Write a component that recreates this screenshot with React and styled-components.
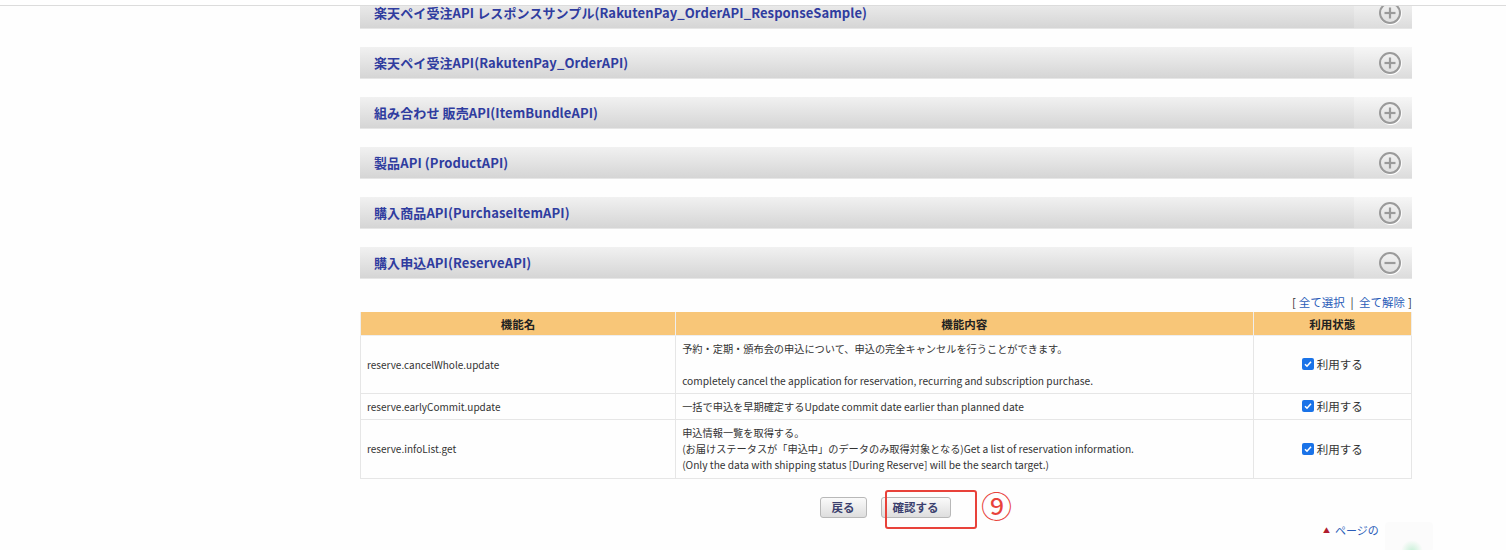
import React from "react";
import styled, { createGlobalStyle } from "styled-components";

const GlobalStyle = createGlobalStyle`
  html, body {
    margin: 0;
    padding: 0;
    background: #fff;
    font-family: "Noto Sans CJK JP", "Noto Sans", sans-serif;
    color: #333;
  }
`;

const Page = styled.div`
  width: 1506px;
  height: 550px;
  overflow: hidden;
  position: relative;
  background: #fefefe;
`;

const TopBar = styled.div`
  height: 5px;
  border-bottom: 1px solid #dcdcdc;
  background: #fff;
  position: relative;
  z-index: 2;
`;

const Content = styled.div`
  width: 1052px;
  margin: -9px 0 0 360px;
`;

const SectionHeader = styled.div`
  height: 32px;
  margin-bottom: 18px;
  display: flex;
  align-items: center;
  background: linear-gradient(#f1f1f1, #d5d5d5);
  border-bottom: 1px solid #e6e6e6;
  box-sizing: border-box;
`;

const SectionTitle = styled.div`
  flex: 1;
  padding-left: 14px;
  font-size: 13px;
  font-weight: 700;
  color: #2f3c9f;
  letter-spacing: 0.1px;
`;

const IconCell = styled.div`
  width: 58px;
  height: 100%;
  display: flex;
  align-items: center;
  justify-content: flex-end;
  padding-right: 10px;
  box-sizing: border-box;
  background: linear-gradient(#f6f6f6, #dcdcdc);
`;

const LinksRow = styled.div`
  margin-top: -4px;
  height: 18px;
  display: flex;
  justify-content: flex-end;
  align-items: center;
  font-size: 11.5px;
  color: #333;
  gap: 3px;
`;

const Link = styled.a`
  color: #2a5cb8;
  text-decoration: none;
`;

const Table = styled.table`
  width: 100%;
  border-collapse: collapse;
  font-size: 10px;
  color: #333;
  margin-top: 1px;
`;

const Th = styled.th`
  background: #f8c678;
  height: 23px;
  padding: 0;
  font-size: 11.5px;
  font-weight: 700;
  color: #222;
  border: 1px solid #eeeeee;
  border-top: none;
  width: ${(p) => p.w}px;
`;

const Td = styled.td`
  border: 1px solid #e6e6e6;
  padding: 0 6px;
  height: ${(p) => p.h}px;
  vertical-align: middle;
  text-align: ${(p) => (p.center ? "center" : "left")};
  line-height: 16px;
`;

const Desc = styled.div`
  font-size: 10.2px;
`;

const Gap = styled.div`
  height: 16px;
`;

const UseLabel = styled.label`
  display: inline-flex;
  align-items: center;
  gap: 3px;
  font-size: 11.5px;
  color: #333;
`;

const Check = styled.span`
  width: 12px;
  height: 12px;
  border-radius: 2px;
  background: #1a73e8;
  display: inline-flex;
  align-items: center;
  justify-content: center;
`;

const ButtonRow = styled.div`
  position: relative;
  display: flex;
  justify-content: center;
  gap: 14px;
  margin-top: 18px;
  padding-right: 2px;
`;

const Button = styled.button`
  height: 21px;
  padding: 0 ${(p) => p.px}px;
  border: 1px solid #b8b8b8;
  border-radius: 3px;
  background: linear-gradient(#fafafa, #dedede);
  font-family: inherit;
  font-size: 11.5px;
  font-weight: 700;
  color: #3b3f6e;
  line-height: 19px;
`;

const Marker = styled.div`
  position: absolute;
  left: 525px;
  top: -7px;
  width: 88px;
  height: 35px;
  border: 2px solid #e8423a;
  border-radius: 3px;
`;

const Number = styled.div`
  position: absolute;
  left: 621px;
  top: -9px;
  font-size: 31px;
  line-height: 34px;
  color: #e8423a;
`;

const PageTop = styled.div`
  position: absolute;
  left: 1323px;
  top: 522px;
  font-size: 11px;
  color: #2a5cb8;
  display: flex;
  align-items: center;
  gap: 5px;
`;

const Arrow = styled.span`
  color: #b01c2e;
  font-size: 7px;
`;

const Blob = styled.div`
  position: absolute;
  left: 1385px;
  top: 522px;
  width: 48px;
  height: 30px;
  background: #fbfbfb;
  border-radius: 4px;
  &::after {
    content: "";
    position: absolute;
    left: 16px;
    top: 18px;
    width: 22px;
    height: 22px;
    border-radius: 50%;
    background: radial-gradient(#c9f0d8, #fbfbfb 70%);
  }
`;

const CircleIcon = ({ minus }) => (
  <svg width="24" height="24" viewBox="0 0 24 24">
    <circle cx="12" cy="12" r="10.5" fill="none" stroke="#fff" strokeWidth="1.6" transform="translate(0.6 0.8)" />
    <circle cx="12" cy="12" r="10" fill="none" stroke="#9a9a9a" strokeWidth="2" />
    <path d="M6.5 12h11" stroke="#9a9a9a" strokeWidth="2.2" />
    {!minus && <path d="M12 6.5v11" stroke="#9a9a9a" strokeWidth="2.2" />}
  </svg>
);

const CheckMark = () => (
  <svg width="10" height="10" viewBox="0 0 10 10">
    <path d="M2 5.2l2 2 4-4.4" fill="none" stroke="#fff" strokeWidth="1.6" />
  </svg>
);

const sections = [
  "楽天ペイ受注API レスポンスサンプル(RakutenPay_OrderAPI_ResponseSample)",
  "楽天ペイ受注API(RakutenPay_OrderAPI)",
  "組み合わせ 販売API(ItemBundleAPI)",
  "製品API (ProductAPI)",
  "購入商品API(PurchaseItemAPI)",
  "購入申込API(ReserveAPI)",
];

const rows = [
  {
    name: "reserve.cancelWhole.update",
    h: 57,
    desc: [
      "予約・定期・頒布会の申込について、申込の完全キャンセルを行うことができます。",
      null,
      "completely cancel the application for reservation, recurring and subscription purchase.",
    ],
  },
  {
    name: "reserve.earlyCommit.update",
    h: 25,
    desc: ["一括で申込を早期確定するUpdate commit date earlier than planned date"],
  },
  {
    name: "reserve.infoList.get",
    h: 58,
    desc: [
      "申込情報一覧を取得する。",
      "(お届けステータスが「申込中」のデータのみ取得対象となる)Get a list of reservation information.",
      "(Only the data with shipping status [During Reserve] will be the search target.)",
    ],
  },
];

export default function App() {
  return (
    <Page>
      <GlobalStyle />
      <TopBar />
      <Content>
        {sections.map((s, i) => (
          <SectionHeader key={s}>
            <SectionTitle>{s}</SectionTitle>
            <IconCell>
              <CircleIcon minus={i === sections.length - 1} />
            </IconCell>
          </SectionHeader>
        ))}
        <LinksRow>
          <span>[</span>
          <Link>全て選択</Link>
          <span>&nbsp;|&nbsp;</span>
          <Link>全て解除</Link>
          <span>]</span>
        </LinksRow>
        <Table>
          <thead>
            <tr>
              <Th w={315}>機能名</Th>
              <Th w={579}>機能内容</Th>
              <Th w={158}>利用状態</Th>
            </tr>
          </thead>
          <tbody>
            {rows.map((r) => (
              <tr key={r.name}>
                <Td h={r.h}>{r.name}</Td>
                <Td h={r.h}>
                  {r.desc.map((d, i) =>
                    d ? <Desc key={i}>{d}</Desc> : <Gap key={i} />
                  )}
                </Td>
                <Td h={r.h} center>
                  <UseLabel>
                    <Check>
                      <CheckMark />
                    </Check>
                    利用する
                  </UseLabel>
                </Td>
              </tr>
            ))}
          </tbody>
        </Table>
        <ButtonRow>
          <Button px={11}>戻る</Button>
          <Button px={11}>確認する</Button>
          <Marker />
          <Number>⑨</Number>
        </ButtonRow>
      </Content>
      <PageTop>
        <Arrow>▲</Arrow>
        ページの
      </PageTop>
      <Blob />
    </Page>
  );
}
